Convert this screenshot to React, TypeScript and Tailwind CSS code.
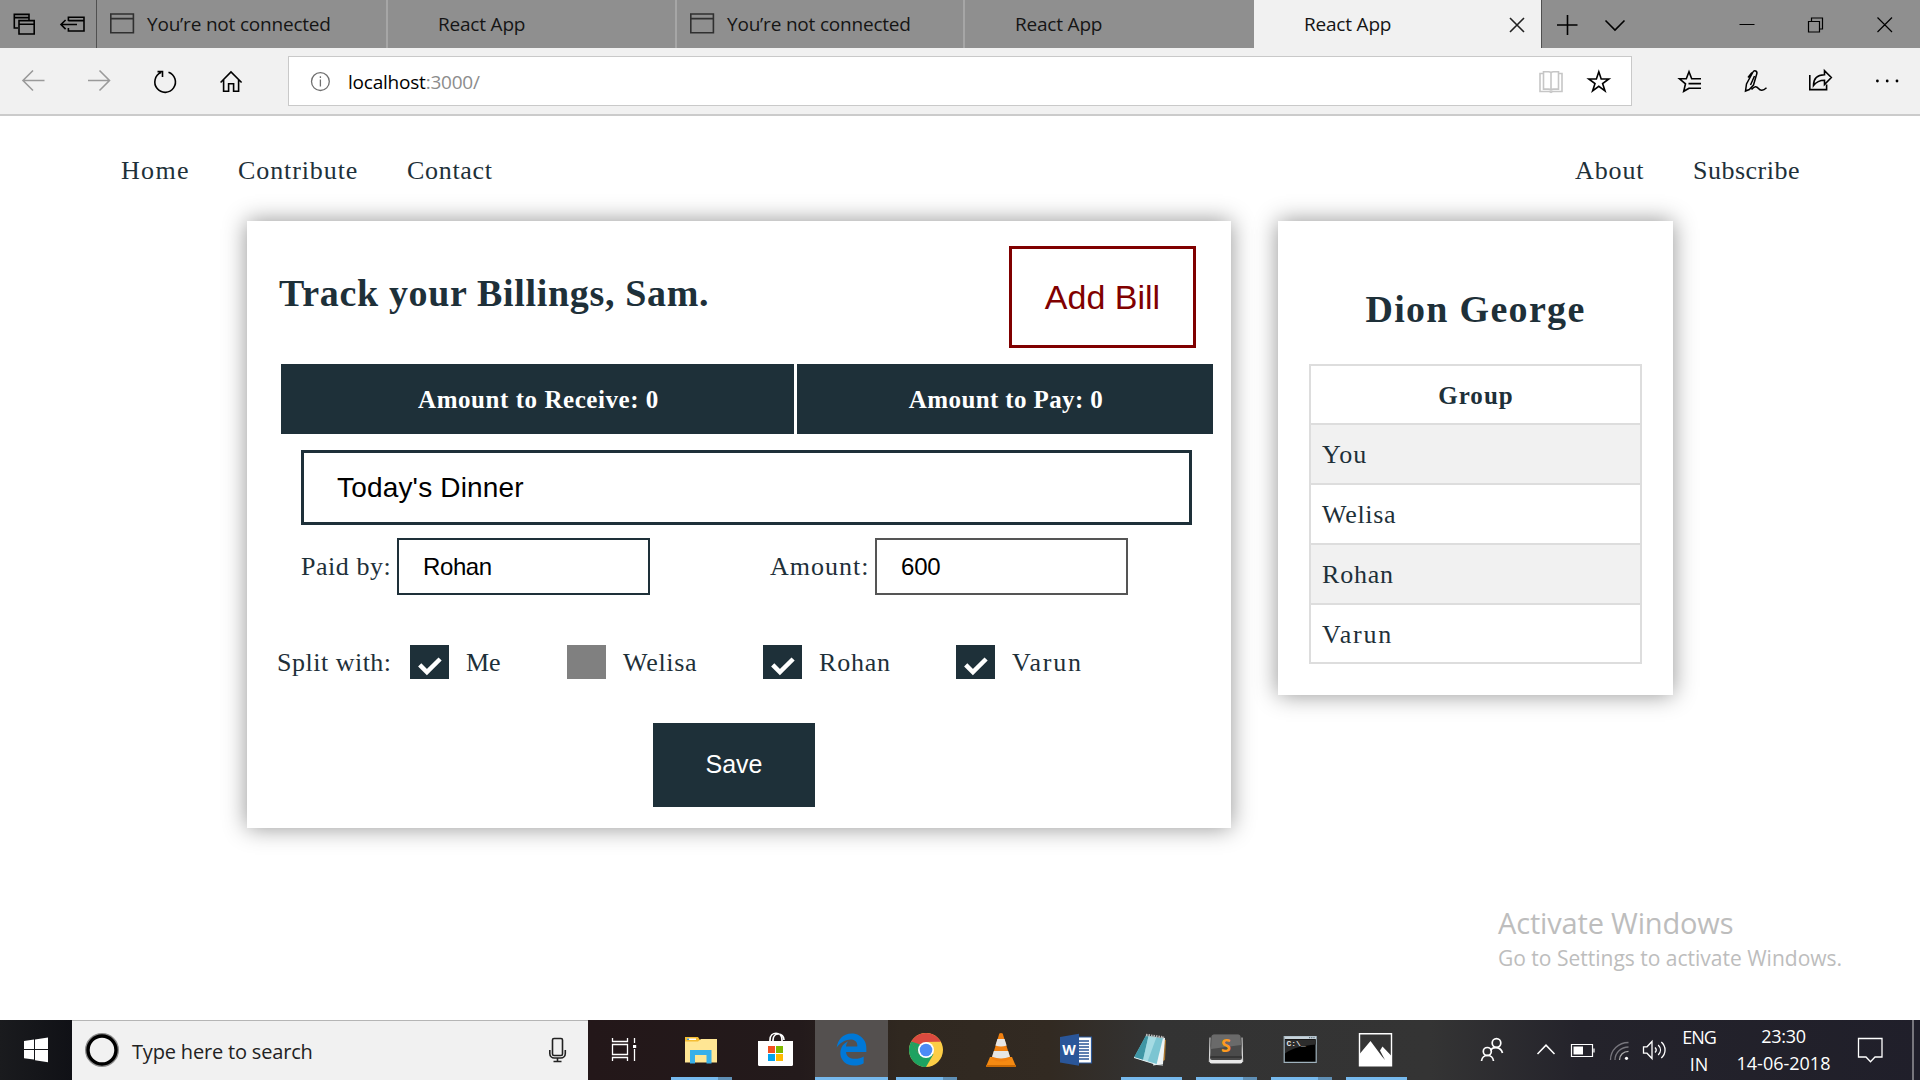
import React from "react";
import type { ReactNode } from "react";
import { FaEdgeLegacy } from "react-icons/fa";

/** Line icon drawn in window coordinates; the viewBox picks its slice. */
function Glyph({ box, className = "", children }: { box: [number, number, number, number]; className?: string; children: ReactNode }) {
  return (
    <svg
      width={box[2]}
      height={box[3]}
      viewBox={box.join(" ")}
      fill="none"
      stroke="currentColor"
      strokeWidth={1.6}
      className={"block shrink-0 " + className}
    >
      {children}
    </svg>
  );
}

/* ---------- Browser tab strip ---------- */

function Tab({ title, page, className }: { title: string; page?: boolean; className: string }) {
  return (
    <div className={"flex h-12 shrink-0 items-center text-[19px] tracking-[-0.2px] text-[#151515] " + className}>
      <div className="w-[50px] shrink-0 pl-[13px]">
        {page && (
          <Glyph box={[0, 0, 25, 21]} className="-mt-px text-[#303030]">
            <path d="M.8 1h22.6v18.8H.8zM.8 5.6h22.6" />
          </Glyph>
        )}
      </div>
      <span className="whitespace-nowrap">{title}</span>
    </div>
  );
}

function TabStrip() {
  return (
    <div className="flex h-12 bg-[#8f8f8f] text-black">
      <Glyph box={[0, 0, 96, 48]}>
        <path d="M18 28H14.3V14.4H29V20M14.3 17.6H29M19 20.6H34.2V34H19zM19 24.3H34.2" />
        <path d="M68.4 21V17.2H84V31H68.4V28M68.4 20.6H84M61 24.5H77M65.6 20L61 24.5l4.6 4.6" />
      </Glyph>
      <div className="w-px bg-[#505050]" />
      <Tab title="You’re not connected" page className="w-[291px] border-r-2 border-[#a6a6a6]" />
      <Tab title="React App" className="w-[289px] border-r-2 border-[#a6a6a6]" />
      <Tab title="You’re not connected" page className="w-[288px] border-r-2 border-[#a6a6a6]" />
      <Tab title="React App" className="w-[289px]" />
      <div className="flex w-[287px] bg-[#f1f1f1]">
        <Tab title="React App" className="w-[240px]" />
        <Glyph box={[1494, 0, 40, 48]} className="text-[#222]">
          <path d="M1510 18l14 14M1524 18l-14 14" />
        </Glyph>
      </div>
      <div className="w-px bg-[#505050]" />
      <Glyph box={[1542, 0, 378, 48]}>
        <path d="M1557 25h20.500M1567.500 15v20M1605.500 20.500l9.500 9.500 9.500-9.500" />
        <path d="M1739.500 24.500h15M1808.500 21.500h11v10.500h-11zM1811.500 21.500v-3.500h11v11h-3M1877.500 17.500l14.500 14.500M1892 17.500l-14.500 14.500" strokeWidth={1.2} />
      </Glyph>
    </div>
  );
}

/* ---------- Address bar ---------- */

function Toolbar() {
  return (
    <div className="flex h-[68px] border-b-2 border-[#cbcbcb] bg-[#f1f1f1] text-black">
      <Glyph box={[0, 48, 288, 66]}>
        <g stroke="#9a9a9a">
          <path d="M44.500 80.500H23M33 70.500l-10 10 10 10" />
          <path d="M88 80.500h21.500M99.500 70.500l10 10-10 10" />
        </g>
        <path d="M168.500 72.300a10.300 10.300 0 1 1-7.500.3M157.500 71.600h5v5.400" />
        <path d="M220.600 82.500L231 72l10.600 10.500M223.600 80v11.200h5v-7.400h5v7.400h5V80" />
      </Glyph>
      <div className="mt-2 flex h-[50px] w-[1344px] items-center border border-[#c9c9c9] bg-white">
        <Glyph box={[289, 57, 58, 48]} className="text-[#6f6f6f]">
          <circle cx="320.400" cy="81.600" r="8.900" strokeWidth={1.3} />
          <path d="M320.400 79.500v7M320.400 76.300v1.600" strokeWidth={1.3} />
        </Glyph>
        <div className="flex-1 pt-0.5 pl-px text-[19px] tracking-[-0.22px]">
          localhost<span className="text-[#8c8c8c]">:3000/</span>
        </div>
        <Glyph box={[1530, 57, 101, 48]}>
          <path
            d="M1540 73.500h3.500v-1.800h5c1.800 0 2.500 1 2.500 1s.7-1 2.500-1h5v1.800h3.500v18h-9.500l-1.500.9-1.500-.9h-9.500zM1543.500 73.500v15.600h5c1.800 0 2.500 1 2.500 1s.7-1 2.500-1h5V73.500M1551 73v16.500"
            stroke="#c6c6c6"
          />
          <path d="M1598.800 71.800l2.400 7.200h7.600l-6.200 4.500 2.400 7.400-6.200-4.600-6.200 4.600 2.400-7.400-6.200-4.500h7.600z" />
        </Glyph>
      </div>
      <Glyph box={[1632, 48, 288, 66]}>
        <path d="M1689.500 88l-5.800 3.300 1.800-7.500-6-5h6.800l2.700-7 2.700 7h9.300M1688.500 83.600h12.500M1688.500 88.200h12.500" />
        <path
          d="M1745.500 91l1-7 6.500-12c1.200-2.200 4.600-1 3.800 1.800l-3.300 11.200-4.200 4.500zM1754.500 76l-4 9M1752 72.500l-4 5M1751.500 89.500c3-3.600 5-3.600 7-1 1.800 2.400 4.500 2.400 8-.8"
          strokeWidth={1.5}
        />
        <path d="M1809.800 75v14.600h16.800v-5M1813.500 85.500c0-7 4.200-10.800 11-10.800v-4l6.800 6.800-6.800 7v-4.300c-5 0-8 1.300-11 5.300z" />
        <g fill="currentColor" stroke="none">
          <circle cx="1877.400" cy="81" r="1.400" />
          <circle cx="1887.200" cy="81" r="1.400" />
          <circle cx="1897" cy="81" r="1.400" />
        </g>
      </Glyph>
    </div>
  );
}

/* ---------- Billing page ---------- */

function SiteNav() {
  return (
    <nav className="flex h-[105px] justify-between pt-10 text-[26px] leading-[30px]">
      <div className="flex pl-[121px]">
        <a className="w-[117px] tracking-[1.3px]">Home</a>
        <a className="w-[169px] tracking-[0.9px]">Contribute</a>
        <a className="tracking-[0.69px]">Contact</a>
      </div>
      <div className="flex">
        <a className="w-[118px] tracking-[0.87px]">About</a>
        <a className="w-[227px] tracking-[0.5px]">Subscribe</a>
      </div>
    </nav>
  );
}

function Check({ name, on, className }: { name: string; on: boolean; className: string }) {
  return (
    <label className={"flex h-[34px] items-center gap-[17px] leading-[34px] " + className}>
      <span className={"h-[34px] w-[39px] " + (on ? "bg-[#1e3039]" : "bg-[#808080]")}>
        {on && (
          <svg width="39" height="34" viewBox="0 0 39 34" fill="none" stroke="#fff" strokeWidth="4.500">
            <path d="M9.700 19.800l7.200 7.200 13.200-13" />
          </svg>
        )}
      </span>
      <span className="pt-[2px]">{name}</span>
    </label>
  );
}

function BillCard() {
  return (
    <section className="h-[607px] w-[984px] bg-white pt-[25px] shadow-[0_0_22px_rgba(0,0,0,0.43)]">
      <div className="flex h-[102px] justify-between pr-[35px] pl-8">
        <h1 className="mt-[25px] text-[38px] leading-[44px] font-bold tracking-[0.67px]">Track your Billings, Sam.</h1>
        <button className="h-[102px] w-[187px] border-[3px] border-[#800000] font-['Liberation_Sans',sans-serif] text-[34px] text-[#800000]">
          Add Bill
        </button>
      </div>
      <div className="mt-4 ml-[34px] flex gap-[3px] text-center text-[25px] leading-[71px] font-bold text-white">
        <div className="h-[70px] w-[513px] bg-[#1e3039] pl-[2px] tracking-[0.55px]">Amount to Receive: 0</div>
        <div className="h-[70px] w-[416px] bg-[#1e3039] pl-[2px] tracking-[0.38px]">Amount to Pay: 0</div>
      </div>
      <div className="mt-4 ml-[54px] flex h-[75px] w-[891px] items-center border-[3px] border-[#1e3039] pl-[33px] font-['Liberation_Sans',sans-serif] text-[28px] tracking-[0.18px] text-black">
        Today's Dinner
      </div>
      <div className="mt-[13px] ml-[54px] flex h-[57px] items-center text-[26px]">
        <span className="w-24 tracking-[0.55px]">Paid by:</span>
        <div className="flex h-[57px] w-[253px] items-center border-2 border-[#1e3039] pl-6 font-['Liberation_Sans',sans-serif] text-[24px] tracking-[-0.4px] text-black">
          Rohan
        </div>
        <span className="ml-[120px] w-[105px] tracking-[1px]">Amount:</span>
        <div className="flex h-[57px] w-[253px] items-center border-2 border-[#555] pl-6 font-['Liberation_Sans',sans-serif] text-[24px] tracking-[-0.2px] text-black">
          600
        </div>
      </div>
      <div className="mt-[50px] ml-[30px] flex text-[26px] leading-[34px]">
        <span className="w-[133px] pt-px tracking-[0.5px]">Split with:</span>
        <Check name="Me" on className="w-[157px]" />
        <Check name="Welisa" on={false} className="w-[196px] tracking-[0.7px]" />
        <Check name="Rohan" on className="w-[193px] tracking-[0.8px]" />
        <Check name="Varun" on className="tracking-[1.7px]" />
      </div>
      <button className="mt-[43px] ml-[406px] block h-[84px] w-[162px] bg-[#1e3039] font-['Liberation_Sans',sans-serif] text-[25px] text-white">
        Save
      </button>
    </section>
  );
}

const members = [
  { name: "You", className: "h-[60px] bg-[#f1f1f1] tracking-[1.1px]" },
  { name: "Welisa", className: "h-[60px] tracking-[0.7px]" },
  { name: "Rohan", className: "h-[60px] bg-[#f1f1f1] tracking-[0.8px]" },
  { name: "Varun", className: "h-[59px] tracking-[1.8px]" },
];

function GroupCard() {
  return (
    <section className="h-[474px] w-[395px] bg-white px-[31px] shadow-[0_0_22px_rgba(0,0,0,0.43)]">
      <h2 className="pt-[66px] text-center text-[38px] leading-[44px] font-bold tracking-[1.3px]">Dion George</h2>
      <div className="mt-[33px] border-2 border-[#ddd]">
        <div className="h-[57px] pl-px text-center text-[25px] leading-[59px] font-bold tracking-[1.05px]">Group</div>
        {members.map((m) => (
          <div key={m.name} className={"border-t-2 border-[#ddd] pl-[11px] text-[26px] leading-[60px] " + m.className}>
            {m.name}
          </div>
        ))}
      </div>
    </section>
  );
}

/* ---------- Taskbar ---------- */

function AppSlot({ running, stacked, active, children }: { running?: boolean; stacked?: boolean; active?: boolean; children: ReactNode }) {
  return (
    <div className={"flex h-[60px] w-[75px] shrink-0 flex-col items-center " + (active ? "border-x border-transparent bg-[#54504f] bg-clip-padding" : "")}>
      <div className="flex h-[57px] w-[75px] justify-center">{children}</div>
      {active && <div className="h-[3px] w-full bg-[#76b9ed]" />}
      {running && !active && (
        <div className="flex h-[3px] w-[61px]">
          <div className="flex-1 bg-[#76b9ed]" />
          {stacked && <div className="w-[14px] bg-[#5f8fb5]" />}
        </div>
      )}
    </div>
  );
}

function AppArt({ children }: { children: ReactNode }) {
  return (
    <svg width="75" height="57" viewBox="0 0 75 57" className="block shrink-0">
      {children}
    </svg>
  );
}

function TaskApps() {
  return (
    <div className="flex">
      <AppSlot running stacked>
        <AppArt>
          <path d="M21 17h13l2 3v3H21z" fill="#f5bd33" />
          <path d="M21 21.500h13l3-2.500h16v23.500H21z" fill="#ffe694" />
          <path d="M23 18.500h9v1.500h-9z" fill="#fff" />
          <path d="M23 18.500h2v1.500h-2z" fill="#4a9bd0" />
          <path d="M26 30h21.500v13.500h-5V35H31v8.500h-5z" fill="#38b0ea" />
        </AppArt>
      </AppSlot>
      <AppSlot>
        <AppArt>
          <path d="M31 24v-4c0-9 12-9 12 0v4M34 22v-2c0-8 11-8 11 0" fill="none" stroke="#fff" strokeWidth="1.700" />
          <path d="M19 21h35v23.500a1.500 1.500 0 0 1-1.500 1.500h-32a1.500 1.500 0 0 1-1.500-1.500z" fill="#fff" />
          <path d="M29 26h7v7h-7z" fill="#f25022" />
          <path d="M37 26h7v7h-7z" fill="#7fba00" />
          <path d="M29 34h7v7h-7z" fill="#00a4ef" />
          <path d="M37 34h7v7h-7z" fill="#ffb900" />
        </AppArt>
      </AppSlot>
      <AppSlot active>
        <FaEdgeLegacy className="mt-[13px] h-[33px] w-[33px] text-[#0078d7]" />
      </AppSlot>
      <AppSlot running stacked>
        <AppArt>
          <circle cx="37" cy="30" r="17" fill="#fccd46" />
          <path d="M37 30L22.300 21.500A17 17 0 0 0 37 47l7.400-12.700z" fill="#1da261" />
          <path d="M22.300 21.500A17 17 0 0 1 51.700 21.500L37 22 29.600 34.300z" fill="#db4a3f" />
          <path d="M22.300 21.500l7.300 12.700 4-9z" fill="#1da261" />
          <path d="M37 22h15l-.3-.5z" fill="#db4a3f" />
          <circle cx="37" cy="30" r="8" fill="#fff" />
          <circle cx="37" cy="30" r="6.300" fill="#4c8bf5" />
        </AppArt>
      </AppSlot>
      <AppSlot>
        <AppArt>
          <path d="M26 37h22l4 9.500H22z" fill="#f58a12" />
          <path d="M22 45h30v2H22z" fill="#c96a05" />
          <path d="M35.300 13.500q1.700-1 3.400 0L46.500 39q-9.500 5-19 0z" fill="#f08010" />
          <path d="M33.400 19h7.200l2 6.500q-5.600 2-11.200 0z" fill="#e6e6e6" />
          <path d="M29.800 31h14.400l1.800 5.800q-9 3.500-18 0z" fill="#e6e6e6" />
        </AppArt>
      </AppSlot>
      <AppSlot>
        <AppArt>
          <path d="M38 17h14.500v26H38z" fill="#fff" stroke="#2b5797" strokeWidth="1.200" />
          <path d="M40 21h10M40 24h10M40 27h10M40 30h10M40 33h10M40 36h10M40 39h10" stroke="#2b5797" strokeWidth="1.400" />
          <path d="M21 17l19-3.300v32L21 42.500z" fill="#2a5699" />
          <text x="30" y="35" textAnchor="middle" fill="#fff" fontSize="14" fontWeight="700" fontFamily="Open Sans, sans-serif">
            W
          </text>
        </AppArt>
      </AppSlot>
      <AppSlot running>
        <AppArt>
          <path d="M48 19l4 1-1 20-4 2z" fill="#a8752e" />
          <path d="M47 17l4 1-2 26-10 1.500z" fill="#eef4f5" />
          <path d="M32 15.500L49 18 42.500 44.500 20 37.500z" fill="#7cc5d2" />
          <path d="M32 15.500l2.500.5L29 40.300l-9-2.800z" fill="#3f96a5" />
          <path d="M34.500 16l8 1-9 24.800-4.500-1.500z" fill="#a5dbe3" />
          <path d="M20 37.500L42.500 44.500 49 45" fill="none" stroke="#e8f1f3" strokeWidth="1" />
          <path d="M32 15l18 2.500" stroke="#b9b9b9" strokeWidth="2.500" strokeDasharray="1.500 1" />
        </AppArt>
      </AppSlot>
      <AppSlot running stacked>
        <AppArt>
          <path d="M22 26h30l1.500 15.500a2 2 0 0 1-2 2h-29a2 2 0 0 1-2-2z" fill="#e9e9e9" />
          <path d="M25 14.500h24a2.500 2.500 0 0 1 2.500 2.500L53 38a2 2 0 0 1-2 2H23a2 2 0 0 1-2-2l1.500-21a2.500 2.500 0 0 1 2.500-2.500z" fill="#4a4a4a" />
          <path d="M25 14.500h24a2.500 2.500 0 0 1 2.500 2.500l.5 8-30 4 .5-12a2.500 2.500 0 0 1 2.500-2.500z" fill="#6a6a6a" />
          <path d="M21.500 37h31" stroke="#222" strokeWidth="1" />
          <path d="M21 17.500L20.300 42" stroke="#ddd" strokeWidth="1" />
          <path d="M53 17.500L53.700 42" stroke="#ddd" strokeWidth="1" />
          <text x="37" y="32" textAnchor="middle" fill="#ff9a1f" fontSize="18" fontWeight="700" fontFamily="Open Sans, sans-serif">
            S
          </text>
        </AppArt>
      </AppSlot>
      <AppSlot running stacked>
        <AppArt>
          <path d="M20.200 16.500h32v25.800h-32z" fill="#000" stroke="#9fb2bd" strokeWidth="1.200" />
          <path d="M20.500 16.500h31.500v2.500H20.500z" fill="#c7d3da" />
          <path d="M21 19.500h31v5c-14 1-25 4-31 9z" fill="#2c2c2c" />
          <path d="M45 17.700h6" stroke="#456" strokeWidth="1" strokeDasharray="1.200 1" />
          <text x="22.500" y="26" fill="#e8e8e8" fontSize="8" fontWeight="700" fontFamily="Liberation Mono, monospace">
            C:\_
          </text>
        </AppArt>
      </AppSlot>
      <AppSlot running>
        <AppArt>
          <path d="M20.500 13.700h32v32h-32z" fill="none" stroke="#fff" strokeWidth="1.400" />
          <path d="M21 33.500L31.500 21 43 36.500l3 3.500-5-9.500 2.500-4 9 9.500v10H21z" fill="#fff" />
        </AppArt>
      </AppSlot>
    </div>
  );
}

function Taskbar() {
  return (
    <footer className="flex h-[60px] bg-[linear-gradient(90deg,#1a1b1e_0px,#101116_72px,#231719_590px,#231a1b_800px,#302820_900px,#322a22_1050px,#333333_1150px,#343434_1430px,#24232b_1580px,#201f2a_1920px)] text-white">
      <Glyph box={[0, 1020, 72, 60]}>
        <path d="M24 1041l10-1.400v9.400H24zM35 1039.400l13-1.800V1049H35zM24 1050h10v9.600l-10-1.400zM35 1050h13v12.200l-13-2z" fill="#fff" stroke="none" />
      </Glyph>
      <div className="flex w-[516px] border-t border-[#b5b5b5] bg-[#f1f1f1]">
        <Glyph box={[72, 1021, 60, 59]} className="text-black">
          <circle cx="102" cy="1050" r="15" stroke="#8a8a8a" strokeWidth={4} />
          <circle cx="102" cy="1050" r="14" strokeWidth={3.4} />
        </Glyph>
        <span className="flex-1 text-[20px] leading-[61px] tracking-[-0.18px] text-[#222]">Type here to search</span>
        <Glyph box={[528, 1021, 60, 59]} className="text-[#222]">
          <rect x="552.500" y="1038.500" width="10" height="17" rx="1.500" />
          <path d="M549.800 1050v3.500a4.500 4.500 0 0 0 4.500 4.500h6.500a4.500 4.500 0 0 0 4.500-4.500V1050M557.500 1058v3.500M553.500 1061.500h8" />
        </Glyph>
      </div>
      <Glyph box={[588, 1020, 76, 60]}>
        <path d="M612.500 1038v3.500h15v-3.500M612.500 1061v-3.500h15v3.500M612.500 1044.500h15v10h-15zM634.500 1038v5M634.500 1049v12" strokeWidth={1.3} />
        <path d="M633 1045h3.200v3H633z" fill="#fff" stroke="none" />
      </Glyph>
      <TaskApps />
      <Glyph box={[1414, 1020, 266, 60]}>
        <g strokeWidth={1.7}>
          <circle cx="1496.500" cy="1043" r="4.300" />
          <path d="M1490.500 1050.500c2-4 10-4.500 12 2.500" />
          <circle cx="1487.300" cy="1051.500" r="4" />
          <path d="M1481.500 1061c.5-7.500 11.500-7.500 12 0" />
        </g>
        <path d="M1537.500 1054l8.500-8.800 8.500 8.800" strokeWidth={1.5} />
        <path d="M1571.500 1044.500h21v12h-21zM1594 1048.500v4" strokeWidth={1.2} />
        <path d="M1573.500 1046.500h9.500v8h-9.500z" fill="#fff" stroke="none" />
        <g strokeWidth={1.3}>
          <path d="M1610.500 1060c0-10 8-17.500 18-17.500M1615 1060c0-7.500 6-13 13.500-13" stroke="#77767d" />
          <path d="M1619.500 1060c0-5 4-8.600 9-8.600" stroke="#aaa" />
          <circle cx="1626.500" cy="1058.300" r="1.600" fill="#fff" stroke="none" />
        </g>
        <path d="M1643.500 1046.800h3.500l5-5.300v17l-5-5.300h-3.500zM1655 1047.500c1.500 1.500 1.500 3.500 0 5M1658.200 1045c3 3 3 7 0 10M1661.300 1042c5 4.500 5 11.500 0 16" strokeWidth={1.3} />
      </Glyph>
      <div className="w-[38px] pt-1 text-center text-[18px] leading-[27px]">
        <div className="tracking-[-1.1px]">ENG</div>
        <div>IN</div>
      </div>
      <div className="ml-[15px] w-[101px] pt-[3px] text-center text-[18px] leading-[27px] whitespace-nowrap">
        <div className="tracking-[-0.27px]">23:30</div>
        <div>14-06-2018</div>
      </div>
      <Glyph box={[1834, 1020, 78, 60]}>
        <path d="M1858.500 1038.500h23.500v18.500h-7l-4.500 4.800-4.500-4.800h-7.500z" strokeWidth={1.3} />
      </Glyph>
      <div className="w-0.5 bg-[#77767c]" />
    </footer>
  );
}

export default function App() {
  return (
    <div className="flex h-[1080px] w-[1920px] flex-col overflow-hidden bg-white font-['Open_Sans',sans-serif]">
      <TabStrip />
      <Toolbar />
      <main className="relative flex-1 bg-white font-['Liberation_Serif',serif] text-[#1e3039]">
        <SiteNav />
        <div className="flex gap-[47px] pl-[247px]">
          <BillCard />
          <GroupCard />
        </div>
        <div className="absolute top-[788px] left-[1498px] font-['Open_Sans',sans-serif] whitespace-nowrap text-[#bdbdbd]">
          <div className="text-[29px] leading-[38px] tracking-[-0.17px]">Activate Windows</div>
          <div className="text-[21px] leading-[33px]">Go to Settings to activate Windows.</div>
        </div>
      </main>
      <Taskbar />
    </div>
  );
}
